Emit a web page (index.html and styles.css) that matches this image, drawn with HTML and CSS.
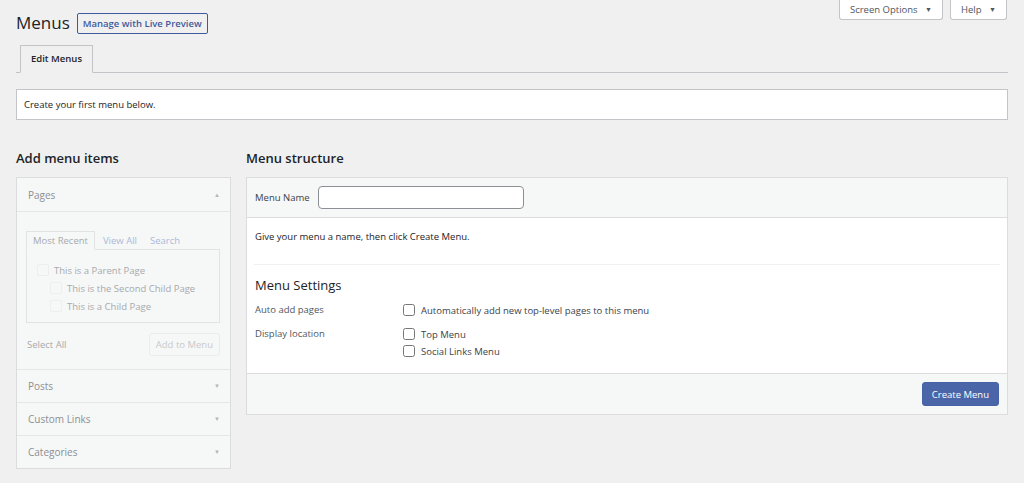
FILE: index.html
```html
<!DOCTYPE html>
<html lang="en">
<head>
    <meta charset="UTF-8">
    <title>Menus</title>
    <link rel="stylesheet" href="styles.css">
</head>
<body>
    <div class="wrap">
        <div class="top-bar">
            <div class="title-row">
                <h1>Menus</h1>
                <a href="#" class="outline-button">Manage with Live Preview</a>
            </div>
            <div class="screen-meta">
                <button class="meta-link">Screen Options <span class="caret">&#9660;</span></button>
                <button class="meta-link">Help <span class="caret">&#9660;</span></button>
            </div>
        </div>

        <div class="nav-tabs">
            <a href="#" class="nav-tab">Edit Menus</a>
        </div>

        <div class="notice">Create your first menu below.</div>

        <div class="columns">
            <!-- left: add menu items (disabled) -->
            <div class="side-col">
                <h2>Add menu items</h2>
                <div class="accordion disabled">
                    <div class="acc-section open">
                        <div class="acc-title">Pages <span class="arrow up">&#9650;</span></div>
                        <div class="acc-content">
                            <div class="tabs">
                                <span class="tab current">Most Recent</span>
                                <span class="tab">View All</span>
                                <span class="tab">Search</span>
                            </div>
                            <div class="tab-panel">
                                <label class="item"><span class="box"></span>This is a Parent Page</label>
                                <label class="item child"><span class="box"></span>This is the Second Child Page</label>
                                <label class="item child"><span class="box"></span>This is a Child Page</label>
                            </div>
                            <div class="acc-actions">
                                <span>Select All</span>
                                <span class="add-btn">Add to Menu</span>
                            </div>
                        </div>
                    </div>
                    <div class="acc-section">
                        <div class="acc-title">Posts <span class="arrow">&#9660;</span></div>
                    </div>
                    <div class="acc-section">
                        <div class="acc-title">Custom Links <span class="arrow">&#9660;</span></div>
                    </div>
                    <div class="acc-section">
                        <div class="acc-title">Categories <span class="arrow">&#9660;</span></div>
                    </div>
                </div>
            </div>

            <!-- right: menu structure -->
            <div class="main-col">
                <h2>Menu structure</h2>
                <div class="menu-edit">
                    <div class="menu-header">
                        <label for="menu-name">Menu Name</label>
                        <input type="text" id="menu-name">
                    </div>
                    <div class="menu-body">
                        <p class="hint">Give your menu a name, then click Create Menu.</p>
                        <div class="settings">
                            <h3>Menu Settings</h3>
                            <div class="setting-row">
                                <div class="setting-label">Auto add pages</div>
                                <div class="setting-input">
                                    <label><input type="checkbox"> Automatically add new top-level pages to this menu</label>
                                </div>
                            </div>
                            <div class="setting-row">
                                <div class="setting-label">Display location</div>
                                <div class="setting-input">
                                    <label><input type="checkbox"> Top Menu</label>
                                    <label><input type="checkbox"> Social Links Menu</label>
                                </div>
                            </div>
                        </div>
                    </div>
                    <div class="menu-footer">
                        <button class="primary-button">Create Menu</button>
                    </div>
                </div>
            </div>
        </div>
    </div>
</body>
</html>
```

FILE: styles.css
```css
body {
    margin: 0;
    background-color: #f0f0f1;
    font-family: 'Open Sans', sans-serif;
    font-size: 9.5px;
    color: #1d2327;
}

.wrap {
    padding: 0 16px;
}

.top-bar {
    display: flex;
    justify-content: space-between;
    align-items: flex-start;
}

.title-row {
    display: flex;
    align-items: center;
    gap: 7px;
    padding-top: 12px;
}

h1 {
    margin: 0;
    font-size: 17px;
    font-weight: 400;
    line-height: 22px;
}

.outline-button {
    display: inline-block;
    padding: 0 5px;
    height: 19px;
    line-height: 19px;
    border: 1px solid #3f5a9c;
    border-radius: 2px;
    color: #3f5a9c;
    text-decoration: none;
    font-size: 9.5px;
    font-weight: 600;
}

.screen-meta {
    display: flex;
    gap: 7px;
    margin-right: 1px;
}

.meta-link {
    height: 20px;
    padding: 0 10px;
    background-color: #ffffff;
    border: 1px solid #c3c4c7;
    border-top: none;
    border-radius: 0 0 3px 3px;
    font-family: inherit;
    font-size: 9.5px;
    color: #50575e;
}

.caret {
    font-size: 7px;
    margin-left: 5px;
    vertical-align: 1px;
}

.nav-tabs {
    margin-top: 11px;
    padding-left: 4px;
    border-bottom: 1px solid #c3c4c7;
    display: flex;
}

.nav-tab {
    display: block;
    padding: 0 10px;
    height: 26px;
    line-height: 26px;
    margin-bottom: -1px;
    border: 1px solid #c3c4c7;
    border-bottom-color: #f0f0f1;
    background-color: #f0f0f1;
    color: #1d2327;
    text-decoration: none;
    font-weight: 600;
    font-size: 9.5px;
}

.notice {
    margin-top: 16px;
    background-color: #ffffff;
    border: 1px solid #c3c4c7;
    height: 29px;
    line-height: 29px;
    padding: 0 7px;
}

.columns {
    display: flex;
    gap: 15px;
    margin-top: 27px;
}

h2 {
    margin: 0 0 8px;
    font-size: 13px;
    font-weight: 600;
    line-height: 22px;
    color: #1d2327;
}

.side-col {
    width: 215px;
    flex-shrink: 0;
}

.main-col {
    flex: 1;
}

/* disabled accordion */
.accordion {
    border: 1px solid #dcdcde;
    background-color: #f6f7f7;
    color: #a7aaad;
}

.acc-section {
    border-top: 1px solid #e6e6e7;
}

.acc-section:first-child {
    border-top: none;
}

.acc-title {
    display: flex;
    justify-content: space-between;
    align-items: center;
    height: 32px;
    padding: 0 10px 0 11px;
    font-size: 10px;
    color: #8c8f94;
}

.acc-section.open .acc-title {
    border-bottom: 1px solid #e6e6e7;
    height: 33px;
}

.arrow {
    font-size: 6px;
    color: #b4b6b9;
}

.acc-content {
    padding: 20px 10px 13px 9px;
}

.tabs {
    display: flex;
    align-items: flex-end;
    gap: 13px;
    height: 17px;
}

.tab {
    color: #a9b9d9;
    line-height: 17px;
}

.tab.current {
    color: #a7aaad;
    padding: 0 6px;
    margin-right: -5px;
    border: 1px solid #e3e3e4;
    border-bottom-color: #f6f7f7;
    margin-bottom: -1px;
}

.tab-panel {
    border: 1px solid #e3e3e4;
    padding: 11px 10px 0;
    box-sizing: border-box;
    height: 74px;
}

.item {
    display: flex;
    align-items: center;
    height: 18px;
    color: #a7aaad;
}

.item.child {
    padding-left: 13px;
}

.box {
    width: 12px;
    height: 12px;
    border: 1px solid #eeeeef;
    border-radius: 2px;
    margin-right: 5px;
    box-sizing: border-box;
}

.acc-actions {
    display: flex;
    justify-content: space-between;
    align-items: center;
    margin-top: 10px;
    padding-left: 1px;
}

.add-btn {
    height: 21px;
    line-height: 21px;
    padding: 0 6px;
    border: 1px solid #ececed;
    border-radius: 3px;
    color: #c8cacc;
}

/* menu structure box */
.menu-edit {
    border: 1px solid #dcdcde;
    background-color: #ffffff;
}

.menu-header {
    display: flex;
    align-items: center;
    gap: 8px;
    height: 39px;
    padding: 0 8px;
    background-color: #f6f7f7;
    border-bottom: 1px solid #dcdcde;
}

.menu-header label {
    color: #3c434a;
}

.menu-header input {
    width: 206px;
    height: 23px;
    box-sizing: border-box;
    border: 1px solid #8c8f94;
    border-radius: 4px;
}

.menu-body {
    padding: 0 7px;
}

.hint {
    margin: 0;
    padding: 12px 1px 0;
    height: 34px;
    border-bottom: 1px solid #f0f0f1;
}

.settings {
    padding: 12px 1px 14px;
}

h3 {
    margin: 0 0 8px;
    font-size: 13px;
    font-weight: 500;
    line-height: 17px;
}

.setting-row {
    display: flex;
    margin-bottom: 8px;
}

.setting-row:last-child {
    margin-bottom: 0;
}

.setting-label {
    width: 148px;
    color: #50575e;
    line-height: 16px;
}

.setting-input {
    display: flex;
    flex-direction: column;
    gap: 1px;
}

.setting-input label {
    display: flex;
    align-items: center;
    gap: 6px;
    height: 16px;
    color: #3c434a;
}

.setting-input input {
    margin: 0;
    width: 12px;
    height: 12px;
}

.menu-footer {
    display: flex;
    justify-content: flex-end;
    padding: 8px;
    background-color: #f6f7f7;
    border-top: 1px solid #dcdcde;
}

.primary-button {
    height: 24px;
    padding: 0 9px;
    border: 1px solid #4563a6;
    border-radius: 3px;
    background-color: #4a66a8;
    color: #ffffff;
    font-family: inherit;
    font-size: 9.5px;
}
```
